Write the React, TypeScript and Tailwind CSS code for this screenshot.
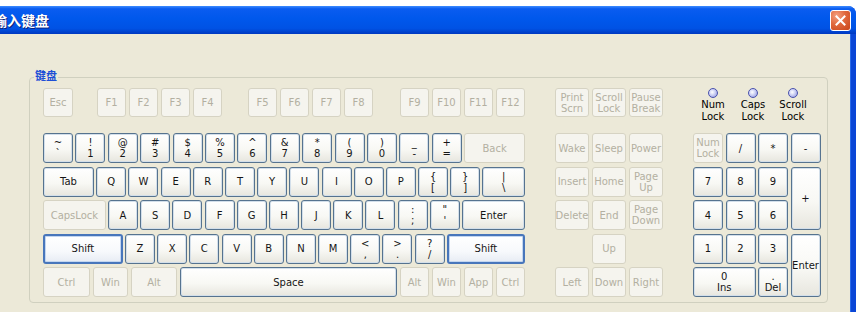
import React from "react";

const ON =
  "border border-[#56738f] bg-[linear-gradient(to_bottom,#ffffff_0%,#f8f8f4_55%,#e7e6de_100%)] shadow-[inset_0_0_0_1px_#d3dfea] text-[#151515]";
const OFF = "border border-[#d6d3c3] bg-[#f5f4ee] text-[#b3b0a1]";
const SHIFT =
  "border-2 border-[#4876bb] bg-[linear-gradient(to_bottom,#ffffff_0%,#f7f9fc_60%,#e7ecf4_100%)] shadow-[inset_0_0_0_1px_#c3d6f0] text-[#151515]";

type KeyProps = {
  kind?: "on" | "off" | "shift";
  className?: string;
  top?: string;
  bottom?: string;
  children?: React.ReactNode;
};

function Key({ kind = "on", className = "", top, bottom, children }: KeyProps) {
  const k = kind === "on" ? ON : kind === "off" ? OFF : SHIFT;
  return (
    <div
      className={`flex shrink-0 flex-col items-center justify-center rounded-[3px] text-[10px] leading-[11px] whitespace-nowrap ${k} ${className}`}
    >
      {top !== undefined ? (
        <>
          <span>{top}</span>
          <span>{bottom}</span>
        </>
      ) : (
        children
      )}
    </div>
  );
}

const row1: [string, string][] = [
  ["~", "`"],
  ["!", "1"],
  ["@", "2"],
  ["#", "3"],
  ["$", "4"],
  ["%", "5"],
  ["^", "6"],
  ["&", "7"],
  ["*", "8"],
  ["(", "9"],
  [")", "0"],
  ["_", "-"],
  ["+", "="],
];

function Led({ a, b }: { a: string; b: string }) {
  return (
    <div className="flex w-[40px] flex-col items-center">
      <div className="h-[10px] w-[10px] rounded-full border border-[#4a52ad] bg-[radial-gradient(circle_at_40%_40%,#ffffff_0%,#d6d9f7_35%,#8a90dc_100%)]" />
      <div className="mt-[1px] text-center text-[10px] leading-[12px] text-black">
        <div>{a}</div>
        <div>{b}</div>
      </div>
    </div>
  );
}

export default function App() {
  return (
    <div className="h-[312px] w-[856px] overflow-hidden bg-white pt-[6px] font-['DejaVu_Sans','Noto_Sans_CJK_SC',sans-serif]">
      <div className="flex h-[306px] w-[856px] flex-col overflow-hidden rounded-tr-[8px] bg-[#0a46d6]">
        {/* title bar */}
        <div className="flex h-[28px] shrink-0 items-center bg-[linear-gradient(to_bottom,#3d8cff_0%,#0a5cf0_10%,#0058ec_45%,#0052e4_80%,#0038c0_100%)]">
          <span className="-ml-[7px] text-[14px] leading-[16px] font-bold text-white [text-shadow:1px_1px_0_#0a1f7a] font-['Noto_Sans_CJK_SC',sans-serif]">
            输入键盘
          </span>
          <div className="mr-[5px] ml-auto flex h-[21px] w-[21px] items-center justify-center rounded-[3px] border border-white bg-[radial-gradient(circle_at_30%_25%,#f4a080_0%,#e0683d_45%,#c94418_100%)]">
            <svg width="11" height="11" viewBox="0 0 11 11">
              <path d="M1.5 1.5 L9.5 9.5 M9.5 1.5 L1.5 9.5" stroke="white" strokeWidth="2" strokeLinecap="square" />
            </svg>
          </div>
        </div>
        {/* body */}
        <div className="mr-[5px] flex-1 border-r border-[#2a6ae8] bg-[#ece9d8] pt-[43px] pl-[29px]">
          <div className="relative h-[226px] w-[799px] rounded-[4px] border border-[#d0d0bf] pt-[10px] pl-[13px]">
            <span className="absolute -top-[7px] left-[4px] bg-[#ece9d8] px-[1px] text-[11px] leading-[12px] font-bold text-[#1d4fd6]">
              键盘
            </span>
            <div className="flex items-start gap-[30px]">
              {/* main block */}
              <div className="flex w-[482px] flex-col">
                <div className="flex h-[29px]">
                  <Key kind="off" className="w-[30px]">Esc</Key>
                  <div className="ml-[24px] flex gap-[3px]">
                    {["F1", "F2", "F3", "F4"].map((f) => (
                      <Key key={f} kind="off" className="w-[29px]">{f}</Key>
                    ))}
                  </div>
                  <div className="ml-[26px] flex gap-[3px]">
                    {["F5", "F6", "F7", "F8"].map((f) => (
                      <Key key={f} kind="off" className="w-[29px]">{f}</Key>
                    ))}
                  </div>
                  <div className="ml-[27px] flex gap-[3px]">
                    {["F9", "F10", "F11", "F12"].map((f) => (
                      <Key key={f} kind="off" className="w-[29px]">{f}</Key>
                    ))}
                  </div>
                </div>
                <div className="mt-[16px] flex flex-col gap-[3.5px]">
                  <div className="flex h-[30px] gap-[2.4px]">
                    {row1.map(([t, b]) => (
                      <Key key={b} className="w-[30px]" top={t} bottom={b} />
                    ))}
                    <Key kind="off" className="flex-1">Back</Key>
                  </div>
                  <div className="flex h-[30px] gap-[2.2px]">
                    <Key className="w-[51px]">Tab</Key>
                    {["Q", "W", "E", "R", "T", "Y", "U", "I", "O", "P"].map((c) => (
                      <Key key={c} className="w-[30px]">{c}</Key>
                    ))}
                    <Key className="w-[30px]" top="{" bottom="[" />
                    <Key className="w-[30px]" top="}" bottom="]" />
                    <Key className="flex-1" top="|" bottom="\" />
                  </div>
                  <div className="flex h-[30px] gap-[2.2px]">
                    <Key kind="off" className="w-[62.8px]">CapsLock</Key>
                    {["A", "S", "D", "F", "G", "H", "J", "K", "L"].map((c) => (
                      <Key key={c} className="w-[30px]">{c}</Key>
                    ))}
                    <Key className="w-[30px]" top=":" bottom=";" />
                    <Key className="w-[30px]" top={'"'} bottom="'" />
                    <Key className="flex-1">Enter</Key>
                  </div>
                  <div className="flex h-[30px] gap-[2.2px]">
                    <Key kind="shift" className="w-[79.8px]">Shift</Key>
                    {["Z", "X", "C", "V", "B", "N", "M"].map((c) => (
                      <Key key={c} className="w-[30px]">{c}</Key>
                    ))}
                    <Key className="w-[30px]" top="<" bottom="," />
                    <Key className="w-[30px]" top=">" bottom="." />
                    <Key className="w-[30px]" top="?" bottom="/" />
                    <Key kind="shift" className="flex-1">Shift</Key>
                  </div>
                  <div className="flex h-[30px] gap-[3px]">
                    <Key kind="off" className="w-[47px]">Ctrl</Key>
                    <Key kind="off" className="w-[35px]">Win</Key>
                    <Key kind="off" className="w-[46px]">Alt</Key>
                    <Key className="w-[217px]">Space</Key>
                    <Key kind="off" className="w-[29px]">Alt</Key>
                    <Key kind="off" className="w-[29px]">Win</Key>
                    <Key kind="off" className="w-[29px]">App</Key>
                    <Key kind="off" className="w-[29px]">Ctrl</Key>
                  </div>
                </div>
              </div>

              {/* navigation block */}
              <div className="flex w-[108px] flex-col">
                <div className="grid h-[29px] grid-cols-[34px_34px_34px] gap-x-[3px]">
                  <Key kind="off" top="Print" bottom="Scrn" />
                  <Key kind="off" top="Scroll" bottom="Lock" />
                  <Key kind="off" top="Pause" bottom="Break" />
                </div>
                <div className="mt-[16px] grid grid-cols-[34px_34px_34px] grid-rows-[30px_30px_30px_30px_30px] gap-x-[3px] gap-y-[3.5px]">
                  <Key kind="off">Wake</Key>
                  <Key kind="off">Sleep</Key>
                  <Key kind="off">Power</Key>
                  <Key kind="off">Insert</Key>
                  <Key kind="off">Home</Key>
                  <Key kind="off" top="Page" bottom="Up" />
                  <Key kind="off">Delete</Key>
                  <Key kind="off">End</Key>
                  <Key kind="off" top="Page" bottom="Down" />
                  <Key kind="off" className="col-start-2">Up</Key>
                  <Key kind="off" className="col-start-1">Left</Key>
                  <Key kind="off">Down</Key>
                  <Key kind="off">Right</Key>
                </div>
              </div>

              {/* numpad */}
              <div className="flex w-[128px] flex-col">
                <div className="flex h-[45px] items-start">
                  <Led a="Num" b="Lock" />
                  <Led a="Caps" b="Lock" />
                  <Led a="Scroll" b="Lock" />
                </div>
                <div className="grid grid-cols-[30px_30px_30px_30px] grid-rows-[30px_30px_30px_30px_30px] gap-x-[2.5px] gap-y-[3.5px]">
                  <Key kind="off" top="Num" bottom="Lock" />
                  <Key>/</Key>
                  <Key>*</Key>
                  <Key>-</Key>
                  <Key>7</Key>
                  <Key>8</Key>
                  <Key>9</Key>
                  <Key className="row-span-2">+</Key>
                  <Key>4</Key>
                  <Key>5</Key>
                  <Key>6</Key>
                  <Key>1</Key>
                  <Key>2</Key>
                  <Key>3</Key>
                  <Key className="row-span-2">Enter</Key>
                  <Key className="col-span-2" top="0" bottom="Ins" />
                  <Key top="." bottom="Del" />
                </div>
              </div>
            </div>
          </div>
        </div>
      </div>
    </div>
  );
}
